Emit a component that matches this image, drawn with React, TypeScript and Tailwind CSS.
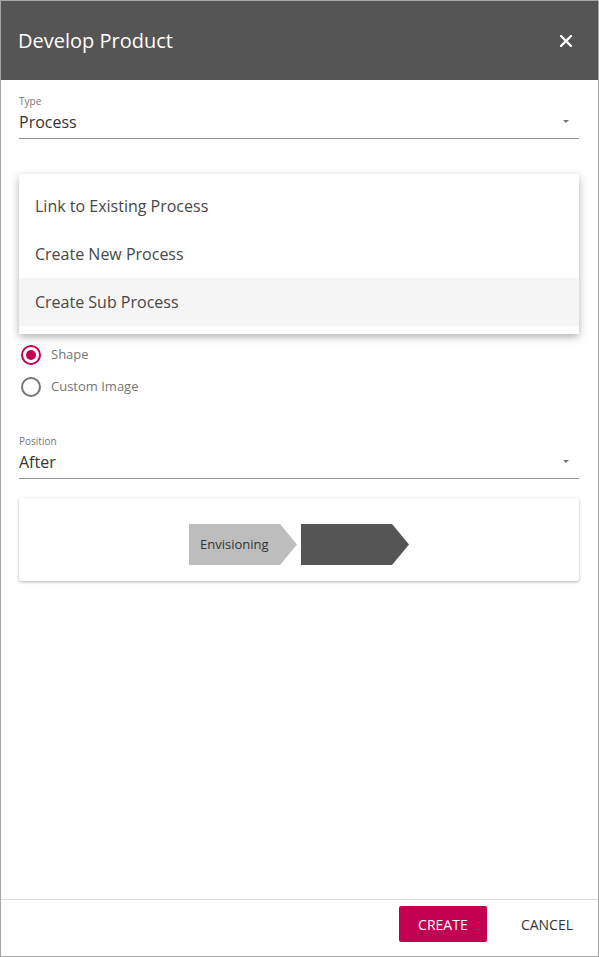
import React from 'react';

const menuItems = ['Link to Existing Process', 'Create New Process', 'Create Sub Process'];

function SelectField({ label, value }: { label: string; value: string }) {
    return (
        <div>
            <div className="h-[12px] text-[10px] leading-[12px] text-[#757575]">{label}</div>
            <div className="mt-[3px] flex items-center justify-between border-b border-[#949494] pb-[4px]">
                <span className="h-[24px] text-[16px] leading-[24px] text-[#333333]">{value}</span>
                {/* tiny caret */}
                <svg width="6" height="4" viewBox="0 0 6 4" className="mr-[10px]">
                    <path d="M0 0 L6 0 L3 3 Z" fill="#757575" />
                </svg>
            </div>
        </div>
    );
}

function Radio({ label, checked }: { label: string; checked?: boolean }) {
    return (
        <div className="flex h-[32px] items-center">
            <span
                className={`ml-[2px] flex h-[20px] w-[20px] items-center justify-center rounded-full border-2 ${
                    checked ? 'border-[#c40052]' : 'border-[#757575]'
                }`}>
                {checked && <span className="h-[10px] w-[10px] rounded-full bg-[#c40052]" />}
            </span>
            <span className="ml-[10px] text-[13px] text-[#757575]">{label}</span>
        </div>
    );
}

export default function App() {
    return (
        <div className="flex h-[957px] w-[599px] flex-col border border-[#a6a6a6] bg-white font-['Open_Sans',sans-serif]">
            {/* Header */}
            <div className="flex h-[79px] shrink-0 items-center justify-between bg-[#555555] pl-[17px] pr-[26px]">
                <h1 className="text-[20px] text-white">Develop Product</h1>
                <svg width="12" height="12" viewBox="0 0 12 12">
                    <path d="M1 1 L11 11 M11 1 L1 11" stroke="white" strokeWidth="2.4" strokeLinecap="round" />
                </svg>
            </div>

            {/* Body */}
            <div className="flex-1 pl-[18px] pr-[19px] pt-[15px]">
                <SelectField label="Type" value="Process" />

                {/* Open dropdown menu overlays the field below */}
                <div className="relative h-[200px]">
                    <div className="absolute left-0 right-0 top-[35px] z-10 bg-white py-[8px] shadow-[0_3px_8px_rgba(0,0,0,0.3)]">
                        {menuItems.map((item, i) => (
                            <div
                                key={item}
                                className={`flex h-[48px] items-center px-[16px] text-[16px] text-[#474747] ${
                                    i === 2 ? 'bg-[#f5f5f5]' : ''
                                }`}>
                                {item}
                            </div>
                        ))}
                    </div>
                </div>

                <Radio label="Shape" checked />
                <Radio label="Custom Image" />

                <div className="mt-[32px]">
                    <SelectField label="Position" value="After" />
                </div>

                {/* Preview */}
                <div className="mt-[19px] flex h-[83px] justify-center gap-[4px] rounded-[2px] bg-white pt-[26px] shadow-[0_1px_3px_rgba(0,0,0,0.3)]">
                    <div className="flex h-[41px] w-[108px] items-center bg-[#bdbdbd] pl-[11px] text-[13px] text-[#333333] [clip-path:polygon(0_0,91px_0,108px_50%,91px_100%,0_100%)]">
                        Envisioning
                    </div>
                    <div className="h-[41px] w-[108px] bg-[#555555] [clip-path:polygon(0_0,91px_0,108px_50%,91px_100%,0_100%)]" />
                </div>
            </div>

            {/* Footer */}
            <div className="flex h-[57px] shrink-0 items-start justify-end border-t border-[#dddddd] pr-[9px] pt-[6px]">
                <button className="h-[36px] w-[88px] rounded-[2px] bg-[#c40052] text-[14px] text-white">CREATE</button>
                <button className="ml-[18px] h-[36px] px-[16px] text-[14px] text-[#333333]">CANCEL</button>
            </div>
        </div>
    );
}
